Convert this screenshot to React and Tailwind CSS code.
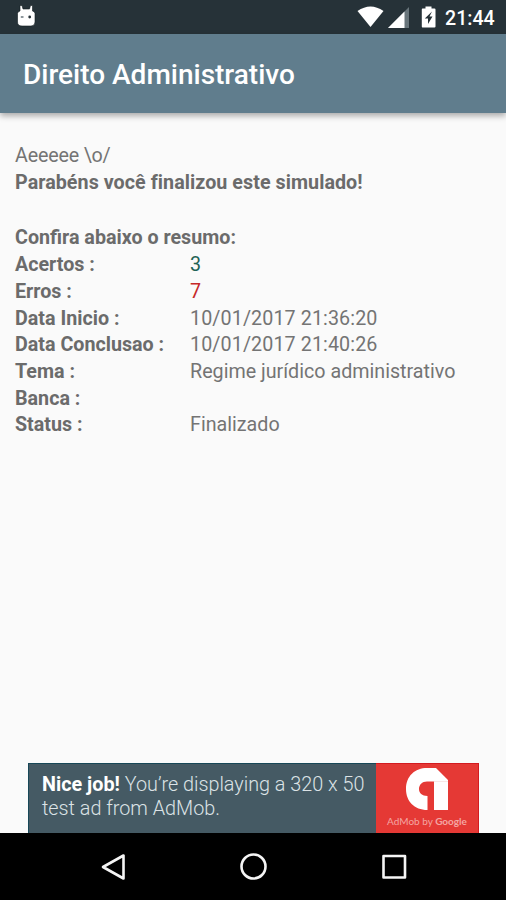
import React from "react";

const rows = [
  { label: "Acertos :", value: "3", color: "text-[#1f6355]" },
  { label: "Erros :", value: "7", color: "text-[#c62828]" },
  { label: "Data Inicio :", value: "10/01/2017 21:36:20", color: "text-[#747474] tracking-[0.1px]" },
  { label: "Data Conclusao :", value: "10/01/2017 21:40:26", color: "text-[#747474] tracking-[0.1px]" },
  { label: "Tema :", value: "Regime jurídico administrativo", color: "text-[#747474]" },
  { label: "Banca :", value: "", color: "text-[#747474]" },
  { label: "Status :", value: "Finalizado", color: "text-[#747474]" },
];

function StatusBar() {
  return (
    <div className="flex h-[34px] shrink-0 items-start bg-[#263238] text-white">
      <svg className="ml-4 mt-[5px]" width="21" height="22" viewBox="0 0 21 22">
        <path d="M4 .5H6L7 4H13.500L14.500 .5H16.500V6Q19 6.500 19 8.500V17Q19 21 15 21H6Q1.500 21 1.500 17V8.500Q1.500 6.500 4 6Z" fill="#fff" stroke="#111b20" strokeWidth=".6" />
        <path d="M4.800 12H7.500" stroke="#68757b" strokeWidth="1.500" />
        <circle cx="13.700" cy="12" r="1.400" fill="#263238" />
      </svg>
      <svg className="ml-auto mt-[6px]" width="27" height="22" viewBox="0 0 27 22">
        <path d="M.5 5Q13.500-4 26.500 5L13.500 21Z" fill="#fff" />
      </svg>
      <svg className="ml-[4px] mt-[6px]" width="22" height="23" viewBox="0 0 22 23">
        <path d="M21 1V22H0Z" fill="#68757b" />
        <path d="M16.500 5.500V22H0Z" fill="#fff" />
      </svg>
      <svg className="ml-[11px] mt-[6px]" width="15" height="22" viewBox="0 0 15 22">
        <path d="M4.500 .5H10.500V2.500H13.500Q14.500 2.500 14.500 3.500V20.500Q14.500 21.500 13.500 21.500H1.500Q.8 21.500 .8 20.500V3.500Q.8 2.500 1.500 2.500H4.500Z" fill="#fff" />
        <path d="M11 5.500L3.800 12.500H7V18L11.500 10.500H8.500Z" fill="#263238" />
      </svg>
      <span className="ml-[9px] mr-[10px] mt-[6px] w-[51px] whitespace-nowrap text-[19.6px] font-medium leading-[26px]">21:44</span>
    </div>
  );
}

function AdBanner() {
  return (
    <div className="ml-[28px] flex h-[70px] w-[451px] shrink-0 bg-[#455a64]">
      <div className="w-[348px] border-l border-t border-[#174757] pl-[13px] pt-[9px] text-[19.8px] font-light leading-[23.5px] text-[#dce3e6]">
        <p className="whitespace-nowrap"><b className="font-bold text-white">Nice job!</b> You’re displaying a 320 x 50</p>
        <p>test ad from AdMob.</p>
      </div>
      <div className="flex w-[103px] flex-col items-center border-r border-t border-[#d31b20] bg-[#e53935]">
        <svg className="mt-[3px]" width="45" height="46" viewBox="0 0 45 46">
          <path d="M22.500 43C9 43 1 34 1 22C1 9 10 1 22 1H31L43 13V43H29V14.500H22C17 14.500 14 18 14 22C14 26 17 29 22.500 29Z" fill="#fff" />
          <path d="M29 14.500H43" stroke="#f1d7d7" strokeWidth=".6" />
        </svg>
        <p className="mt-px whitespace-nowrap font-[Lato,sans-serif] text-[10px] leading-[14px] text-[#f4a6a3]">AdMob by <span className="font-bold">Google</span></p>
      </div>
    </div>
  );
}

export default function App() {
  return (
    <div className="flex h-[900px] w-[506px] flex-col overflow-hidden bg-[#fafafa] font-[Roboto,sans-serif]">
      <StatusBar />
      <header className="flex h-[79px] shrink-0 items-center bg-[#607d8d] pl-[23px] text-white shadow-[0_3px_6px_rgba(0,0,0,0.32)]">
        <h1 className="pt-[2px] text-[28px] font-medium leading-8">Direito Administrativo</h1>
      </header>
      <main className="flex-1 px-[15px] pt-[30px] text-[19.7px] leading-[26.7px] text-[#6b6b6b]">
        <p className="text-[#747474] tracking-[-0.18px]">Aeeeee \o/</p>
        <p className="font-bold tracking-[0.05px]">Parabéns você finalizou este simulado!</p>
        <p className="mt-[29px] font-bold">Confira abaixo o resumo:</p>
        <dl>
          {rows.map((row) => (
            <div key={row.label} className="flex">
              <dt className="w-[175px] shrink-0 font-bold">{row.label}</dt>
              <dd className={row.color}>{row.value}</dd>
            </div>
          ))}
        </dl>
      </main>
      <AdBanner />
      <nav className="flex h-[67px] shrink-0 justify-between bg-black pl-[100px] pr-[98px] pt-[19px]">
        <svg width="28" height="30" viewBox="0 0 28 30" fill="none" stroke="#f5f5f5" strokeWidth="2.600" strokeLinejoin="round">
          <path d="M23.500 3.500V26.500L3 15Z" />
        </svg>
        <svg width="28" height="30" viewBox="0 0 28 30" fill="none" stroke="#f5f5f5" strokeWidth="2.600">
          <circle cx="13.500" cy="14.500" r="12" />
        </svg>
        <svg width="28" height="30" viewBox="0 0 28 30" fill="none" stroke="#f5f5f5" strokeWidth="2.600" strokeLinejoin="round">
          <rect x="3.500" y="4" width="21.500" height="21.500" />
        </svg>
      </nav>
    </div>
  );
}
